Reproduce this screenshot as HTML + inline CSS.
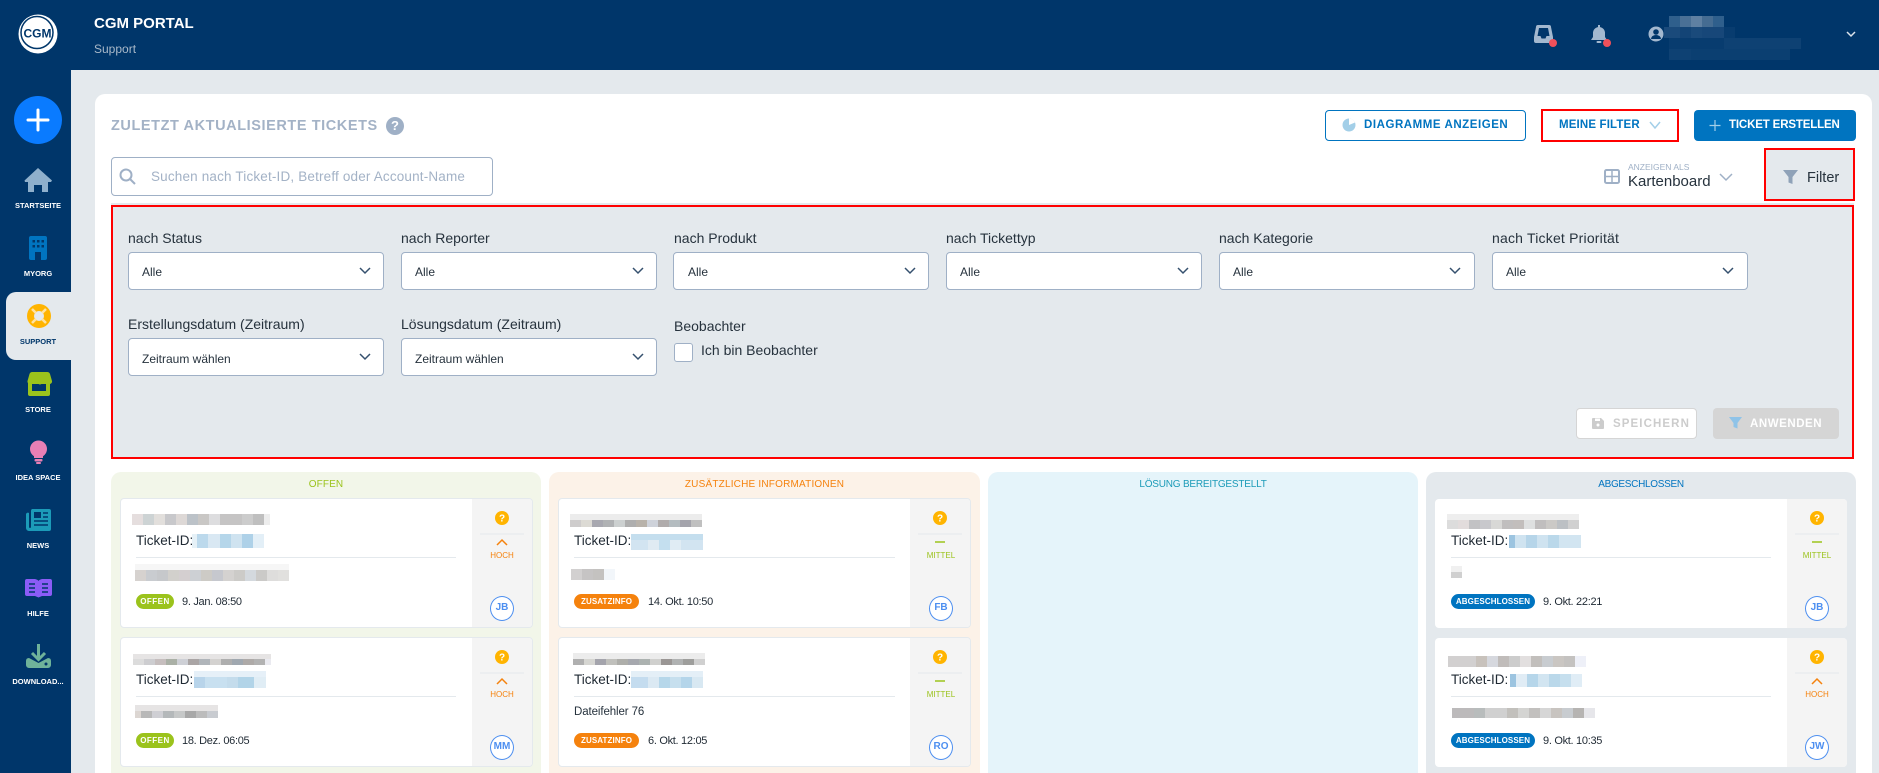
<!DOCTYPE html>
<html lang="de"><head><meta charset="utf-8"><title>CGM Portal Support</title>
<style>
html,body{margin:0;padding:0;width:1879px;height:773px;overflow:hidden}
body{background:#e4e9ed;font-family:"Liberation Sans",sans-serif;color:#1f2933}
div,span{position:absolute;box-sizing:border-box}
#r{left:0;top:0;width:1879px;height:773px;overflow:hidden;background:#e4e9ed}
.t{white-space:nowrap;line-height:20px;height:20px}
.nav{width:76px;left:0;text-align:center;font-size:7.5px;font-weight:700;color:#fff;line-height:12px;height:12px;white-space:nowrap}
.lb{font-size:14px;line-height:20px;height:20px;white-space:nowrap;color:#26323d}
.sel{width:256px;height:38px;background:#fff;border:1px solid #9fb0c6;border-radius:4px}
.sv{font-size:12px;line-height:20px;height:20px;white-space:nowrap;color:#26323d}
.col{top:472px;width:430px;height:301px;border-radius:10px 10px 0 0}
.ch{top:478px;height:14px;line-height:14px;font-size:10px;text-align:center;white-space:nowrap}
.card{width:413px;height:130px;background:#fff;border:1px solid #e4e9ed;border-radius:4px;overflow:hidden}
.side{right:0;top:0;bottom:0;width:60px;background:#f4f4f4}
.tid{font-size:13.5px;line-height:18px;height:18px;white-space:nowrap}
.hr{height:1px;background:#e4e9ed}
.bd{height:15px;border-radius:8px;color:#fff;font-size:8px;font-weight:700;line-height:15px;text-align:center;white-space:nowrap;letter-spacing:.1px}
.dt{font-size:11px;line-height:16px;height:16px;white-space:nowrap;letter-spacing:-.3px}
.pr{font-size:8px;line-height:10px;height:10px;text-align:center;width:60px;white-space:nowrap}
.av{width:24px;height:25px;border:1.5px solid #4d8ff0;border-radius:50%;background:#fff;color:#4d8ff0;font-weight:700;font-size:10px;line-height:22px;text-align:center}
</style></head><body>
<div id="r">

<div style="left:0;top:0;width:1879px;height:70px;background:#00366a"></div>
<div style="left:0;top:0;width:71px;height:773px;background:#00366a"></div>
<div style="left:6px;top:292px;width:65px;height:68px;background:#e4e9ed;border-radius:10px 0 0 10px"></div>
<div class="t" style="left:94px;top:14px;font-size:15px;font-weight:700;color:#fff">CGM PORTAL</div>
<div class="t" style="left:94px;top:39px;font-size:12px;color:#a9b9c9">Support</div>

<div class="nav" style="top:200px">STARTSEITE</div>
<div class="nav" style="top:268px">MYORG</div>
<div class="nav" style="top:336px;color:#00366a">SUPPORT</div>
<div class="nav" style="top:404px">STORE</div>
<div class="nav" style="top:472px">IDEA SPACE</div>
<div class="nav" style="top:540px">NEWS</div>
<div class="nav" style="top:608px">HILFE</div>
<div class="nav" style="top:676px">DOWNLOAD...</div>

<div style="left:95px;top:94px;width:1777px;height:679px;background:#fff;border-radius:10px 10px 0 0"></div>

<div class="t" style="left:111px;top:116px;font-size:14.5px;font-weight:700;letter-spacing:.58px;color:#a3b2c6">ZULETZT AKTUALISIERTE TICKETS</div>
<div style="left:386px;top:117px;width:18px;height:18px;border-radius:50%;background:#9fb0c6;color:#fff;font-weight:700;font-size:13px;line-height:18px;text-align:center">?</div>

<div style="left:111px;top:157px;width:382px;height:39px;border:1px solid #9fb0c6;border-radius:4px;background:#fff"></div>
<div class="t" style="left:151px;top:167px;font-size:13.5px;color:#a3b2c6;letter-spacing:.17px">Suchen nach Ticket-ID, Betreff oder Account-Name</div>

<div style="left:1325px;top:110px;width:201px;height:31px;border:1px solid #0074c0;border-radius:4px"></div>
<div class="t" style="left:1364px;top:115px;font-size:11.5px;font-weight:700;color:#0074c0;letter-spacing:.55px">DIAGRAMME ANZEIGEN</div>
<div style="left:1541px;top:109px;width:138px;height:33px;border:2px solid #f00"></div>
<div class="t" style="left:1559px;top:115px;font-size:11.5px;font-weight:700;color:#0074c0;letter-spacing:.15px">MEINE FILTER</div>
<div style="left:1694px;top:110px;width:162px;height:31px;background:#0074c0;border-radius:4px"></div>
<div class="t" style="left:1729px;top:115px;font-size:11.5px;font-weight:700;color:#fff;letter-spacing:-.15px">TICKET ERSTELLEN</div>

<div class="t" style="left:1628px;top:157px;font-size:8.5px;color:#9fb0c6">ANZEIGEN ALS</div>
<div class="t" style="left:1628px;top:172px;font-size:15px;color:#26323d">Kartenboard</div>
<div style="left:1764px;top:148px;width:91px;height:53px;background:#e4e9ed;border:2px solid #f00"></div>
<div class="t" style="left:1807px;top:168px;font-size:14.5px;color:#26323d">Filter</div>

<div style="left:111px;top:203px;width:1743px;height:3px;background:#e4e9ed"></div>
<div style="left:111px;top:205px;width:1743px;height:254px;background:#e4e9ed;border:2px solid #f00"></div>

<div class="lb" style="left:128px;top:228px">nach Status</div>
<div class="lb" style="left:401px;top:228px">nach Reporter</div>
<div class="lb" style="left:674px;top:228px">nach Produkt</div>
<div class="lb" style="left:946px;top:228px">nach Tickettyp</div>
<div class="lb" style="left:1219px;top:228px">nach Kategorie</div>
<div class="lb" style="left:1492px;top:228px;letter-spacing:.2px">nach Ticket Priorität</div>
<div class="sel" style="left:128px;top:252px"></div><div class="sv" style="left:142px;top:262px">Alle</div>
<div class="sel" style="left:401px;top:252px"></div><div class="sv" style="left:415px;top:262px">Alle</div>
<div class="sel" style="left:673px;top:252px"></div><div class="sv" style="left:688px;top:262px">Alle</div>
<div class="sel" style="left:946px;top:252px"></div><div class="sv" style="left:960px;top:262px">Alle</div>
<div class="sel" style="left:1219px;top:252px"></div><div class="sv" style="left:1233px;top:262px">Alle</div>
<div class="sel" style="left:1492px;top:252px"></div><div class="sv" style="left:1506px;top:262px">Alle</div>
<div class="lb" style="left:128px;top:314px">Erstellungsdatum (Zeitraum)</div>
<div class="lb" style="left:401px;top:314px">Lösungsdatum (Zeitraum)</div>
<div class="lb" style="left:674px;top:316px">Beobachter</div>
<div class="sel" style="left:128px;top:338px"></div><div class="sv" style="left:142px;top:349px">Zeitraum wählen</div>
<div class="sel" style="left:401px;top:338px"></div><div class="sv" style="left:415px;top:349px">Zeitraum wählen</div>
<div style="left:674px;top:343px;width:19px;height:19px;background:#fff;border:1px solid #9fb0c6;border-radius:3px"></div>
<div class="lb" style="left:701px;top:340px">Ich bin Beobachter</div>

<div style="left:1576px;top:408px;width:121px;height:31px;background:#fff;border:1px solid #d5d5d5;border-radius:4px"></div>
<div class="t" style="left:1613px;top:414px;font-size:11.5px;font-weight:700;color:#ccc;letter-spacing:1.1px">SPEICHERN</div>
<div style="left:1713px;top:408px;width:126px;height:31px;background:#d5d5d5;border-radius:4px"></div>
<div class="t" style="left:1750px;top:414px;font-size:11.5px;font-weight:700;color:#fff;letter-spacing:.55px">ANWENDEN</div>

<div class="col" style="left:111px;background:#f2f6e9"></div>
<div class="col" style="left:549px;width:431px;background:#fcf2e8"></div>
<div class="col" style="left:988px;background:#e5f4fa"></div>
<div class="col" style="left:1426px;background:#e4e9ed"></div>
<div class="ch" style="left:111px;width:430px;color:#9bc31c;letter-spacing:.1px">OFFEN</div>
<div class="ch" style="left:549px;width:431px;color:#f5820d;letter-spacing:.2px">ZUSÄTZLICHE INFORMATIONEN</div>
<div class="ch" style="left:988px;width:430px;color:#1c9bb8;letter-spacing:-.2px">LÖSUNG BEREITGESTELLT</div>
<div class="ch" style="left:1426px;width:430px;color:#0074c0;letter-spacing:-.3px">ABGESCHLOSSEN</div>

<!-- column 1 -->
<div class="card" style="left:120px;top:498px"><div class="side"></div></div>
<div class="card" style="left:120px;top:637px"><div class="side"></div></div>
<div class="tid" style="left:136px;top:532px">Ticket-ID:</div><div class="hr" style="left:136px;top:557px;width:320px"></div>
<div class="tid" style="left:136px;top:671px">Ticket-ID:</div><div class="hr" style="left:136px;top:696px;width:320px"></div>
<div class="bd" style="left:136px;top:594px;width:38px;background:#9bc31c;letter-spacing:.5px">OFFEN</div><div class="dt" style="left:182px;top:594px">9. Jan. 08:50</div>
<div class="bd" style="left:136px;top:733px;width:38px;background:#9bc31c;letter-spacing:.5px">OFFEN</div><div class="dt" style="left:182px;top:733px">18. Dez. 06:05</div>
<div class="pr" style="left:472px;top:551px;color:#f5820d">HOCH</div><div class="av" style="left:490px;top:596px">JB</div>
<div class="pr" style="left:472px;top:690px;color:#f5820d">HOCH</div><div class="av" style="left:490px;top:735px">MM</div>

<!-- column 2 -->
<div class="card" style="left:558px;top:498px"><div class="side"></div></div>
<div class="card" style="left:558px;top:637px"><div class="side"></div></div>
<div class="tid" style="left:574px;top:532px">Ticket-ID:</div><div class="hr" style="left:574px;top:557px;width:321px"></div>
<div class="tid" style="left:574px;top:671px">Ticket-ID:</div><div class="hr" style="left:574px;top:696px;width:321px"></div>
<div class="t" style="left:574px;top:702px;font-size:11.5px;letter-spacing:-.1px;color:#26323d">Dateifehler 76</div>
<div class="bd" style="left:574px;top:594px;width:65px;background:#f5820d">ZUSATZINFO</div><div class="dt" style="left:648px;top:594px">14. Okt. 10:50</div>
<div class="bd" style="left:574px;top:733px;width:65px;background:#f5820d">ZUSATZINFO</div><div class="dt" style="left:648px;top:733px">6. Okt. 12:05</div>
<div class="pr" style="left:911px;top:551px;color:#9bc31c">MITTEL</div><div class="av" style="left:929px;top:596px">FB</div>
<div class="pr" style="left:911px;top:690px;color:#9bc31c">MITTEL</div><div class="av" style="left:929px;top:735px">RO</div>

<!-- column 4 -->
<div class="card" style="left:1435px;top:499px;width:412px;height:129px;border:0"><div class="side"></div></div>
<div class="card" style="left:1435px;top:638px;width:412px;height:129px;border:0"><div class="side"></div></div>
<div class="tid" style="left:1451px;top:532px">Ticket-ID:</div><div class="hr" style="left:1451px;top:557px;width:320px"></div>
<div class="tid" style="left:1451px;top:671px">Ticket-ID:</div><div class="hr" style="left:1451px;top:696px;width:320px"></div>
<div class="bd" style="left:1451px;top:594px;width:84px;background:#0074c0">ABGESCHLOSSEN</div><div class="dt" style="left:1543px;top:594px">9. Okt. 22:21</div>
<div class="bd" style="left:1451px;top:733px;width:84px;background:#0074c0">ABGESCHLOSSEN</div><div class="dt" style="left:1543px;top:733px">9. Okt. 10:35</div>
<div class="pr" style="left:1787px;top:551px;color:#9bc31c">MITTEL</div><div class="av" style="left:1805px;top:596px">JB</div>
<div class="pr" style="left:1787px;top:690px;color:#f5820d">HOCH</div><div class="av" style="left:1805px;top:735px">JW</div>

<svg width="1879" height="773" style="position:absolute;left:0;top:0">
<!-- logo -->
<circle cx="38" cy="34" r="19.500" fill="#fff"/>
<circle cx="37" cy="32.500" r="16" fill="none" stroke="#00366a" stroke-width="1.500"/>
<text x="37.500" y="37.500" text-anchor="middle" font-family="Liberation Sans" font-weight="700" font-size="12" fill="#00366a">CGM</text>
<!-- plus -->
<circle cx="38" cy="120" r="24" fill="#0a7bff"/><path d="M38 110v20M28 120h20" stroke="#fff" stroke-width="3" stroke-linecap="round"/>
<!-- home -->
<path d="M38 168L52 180.500 51 182H48V192H42V185H34V192H28V182H25L24.500 180.500z" fill="#8fb0cc"/>
<!-- myorg -->
<rect x="29" y="236" width="18" height="24" rx="2" fill="#0074c0"/>
<g fill="#00366a"><rect x="32.500" y="240" width="2.500" height="2.500"/><rect x="37" y="240" width="2.500" height="2.500"/><rect x="41.500" y="240" width="2.500" height="2.500"/><rect x="32.500" y="245" width="2.500" height="2.500"/><rect x="37" y="245" width="2.500" height="2.500"/><rect x="41.500" y="245" width="2.500" height="2.500"/><rect x="35" y="252" width="6" height="8"/></g>
<!-- support -->
<circle cx="39" cy="316" r="12" fill="#ffb400"/><circle cx="39" cy="316" r="5" fill="#e4e9ed"/><path d="M32 309l4 4M46 309l-4 4M32 323l4-4M46 323l-4-4" stroke="#ffe2a0" stroke-width="2.500"/>
<!-- store -->
<rect x="28" y="380" width="22" height="16" rx="2" fill="#9bc31c"/>
<rect x="32" y="384" width="14" height="7" fill="#00366a"/>
<path d="M30 372h17a3 3 0 0 1 3 2l2 7a2.500 2.500 0 0 1-5 1a2.500 2.500 0 0 1-4.500 0a2.500 2.500 0 0 1-5 0a2.500 2.500 0 0 1-4.500 0a2.500 2.500 0 0 1-5.500-1l2-7a3 3 0 0 1 3-2z" fill="#9bc31c"/>
<!-- bulb -->
<circle cx="38.500" cy="449" r="8.500" fill="#e87fb5"/><path d="M34 454h9v4h-9z" fill="#e87fb5"/><rect x="34.500" y="459" width="8" height="2.500" rx="1" fill="#e87fb5"/><rect x="36" y="462" width="5" height="2" rx="1" fill="#e87fb5"/>
<!-- news -->
<path d="M32 509h17a2 2 0 0 1 2 2v18a2 2 0 0 1-2 2H29a3 3 0 0 1-3-3v-14a2 2 0 0 1 3-1v14a1 1 0 0 0 2 0v-16a2 2 0 0 1 1-2z" fill="#1c9bb8"/>
<rect x="34" y="512" width="7" height="6" fill="#00366a"/><path d="M43 513h5M43 517h5M34 521h14M34 525h14" stroke="#00366a" stroke-width="1.500"/>
<!-- hilfe -->
<path d="M25 581a2 2 0 0 1 2-2h7c2 0 4 1 4.500 2c.5-1 2.500-2 4.500-2h7a2 2 0 0 1 2 2v13a2 2 0 0 1-2 2H42l-3.500 1.500L35 596H27a2 2 0 0 1-2-2z" fill="#8b5cf6"/>
<path d="M29 584h6M29 588h6M29 592h6M42 584h6M42 588h6M42 592h6" stroke="#00366a" stroke-width="1.500"/>
<!-- download -->
<path d="M38.500 644v15M32 653l6.500 6.500L45 653" fill="none" stroke="#6fb39a" stroke-width="3"/>
<path d="M29 658l9.500 5 9.500-5q3 0 3 3v4a3 3 0 0 1-3 3H29a3 3 0 0 1-3-3v-4q0-3 3-3z" fill="#6fb39a"/><circle cx="46" cy="664" r="1.500" fill="#00366a"/>

<!-- header icons -->
<path d="M1536 27q0-2 2-2h11q2 0 2 2l2 10v4q0 2-2 2h-15q-2 0-2-2v-4z" fill="#a3b8cf"/><path d="M1539 28h9l1.500 8h-3l-1 2.500h-4l-1-2.500h-3z" fill="#00366a"/>
<circle cx="1553" cy="43" r="4" fill="#f0505a"/>
<path d="M1599 27a6 6 0 0 1 6 6v4l2 3h-16l2-3v-4a6 6 0 0 1 6-6z" fill="#a3b8cf"/><rect x="1598" y="25" width="2" height="3" fill="#a3b8cf"/><rect x="1596.500" y="41" width="5" height="2" rx="1" fill="#a3b8cf"/>
<circle cx="1607" cy="43" r="4" fill="#f0505a"/>
<circle cx="1656" cy="34" r="7.500" fill="#a3b8cf"/><circle cx="1656" cy="32" r="2.800" fill="#00366a"/><path d="M1651 39a5 4 0 0 1 10 0z" fill="#00366a"/>
<g shape-rendering="crispEdges">
<rect x="1669" y="16" width="11" height="11" fill="#2f5f8c"/><rect x="1680" y="16" width="11" height="11" fill="#4a7096"/><rect x="1691" y="16" width="11" height="11" fill="#5f80a2"/><rect x="1702" y="16" width="11" height="11" fill="#456c92"/><rect x="1713" y="16" width="11" height="11" fill="#2f5f8c"/>
<rect x="1664" y="27" width="16" height="11" fill="#1a4a7b"/><rect x="1680" y="27" width="11" height="11" fill="#134476"/><rect x="1691" y="27" width="11" height="11" fill="#1a4a7b"/><rect x="1702" y="27" width="22" height="11" fill="#174779"/><rect x="1724" y="27" width="11" height="11" fill="#083c6f"/>
<rect x="1669" y="38" width="55" height="11" fill="#083c6f"/><rect x="1724" y="38" width="77" height="11" fill="#0e4173"/>
<rect x="1669" y="49" width="22" height="11" fill="#0e4173"/><rect x="1691" y="49" width="99" height="11" fill="#0b3f71"/>
</g>
<path d="M1847 32l4 4 4-4" fill="none" stroke="#dce4ec" stroke-width="1.500"/>

<!-- top buttons -->
<circle cx="1349" cy="125" r="6.500" fill="#a3cfe8"/><path d="M1349 125v-6.500a6.500 6.500 0 0 1 6 4z" fill="#fff"/>
<path d="M1650 122l5 6 5-6" fill="none" stroke="#a3cfe8" stroke-width="1.500"/>
<path d="M1715 120v11M1709.500 125.500h11" stroke="#a3cfe8" stroke-width="1.200"/>
<!-- search -->
<circle cx="126" cy="175" r="5.500" fill="none" stroke="#9fb0c6" stroke-width="2"/><path d="M130 179l5 5" stroke="#9fb0c6" stroke-width="2"/>
<!-- view icon -->
<rect x="1605" y="170" width="14" height="13" rx="1.500" fill="none" stroke="#9fb0c6" stroke-width="2"/><path d="M1612 170v13M1605 176.500h14" stroke="#9fb0c6" stroke-width="1.500"/>
<path d="M1720 174l6 6 6-6" fill="none" stroke="#9fb0c6" stroke-width="1.500"/>
<path d="M1783 170h15l-5.500 7v7l-4-1.500v-5.500z" fill="#8fa2b8"/>
<!-- select chevrons -->
<g fill="none" stroke="#35506e" stroke-width="1.500">
<path d="M360 268l5 5 5-5M633 268l5 5 5-5M905 268l5 5 5-5M1178 268l5 5 5-5M1450 268l5 5 5-5M1723 268l5 5 5-5M360 354l5 5 5-5M633 354l5 5 5-5"/>
</g>
<!-- save / apply -->
<path d="M1593 418h8l3 3v7a1 1 0 0 1-1 1h-10a1 1 0 0 1-1-1v-9a1 1 0 0 1 1-1z" fill="#ccc"/><rect x="1595" y="418.500" width="5" height="2.500" fill="#fff"/><circle cx="1598" cy="425" r="1.500" fill="#fff"/>
<path d="M1729 417h13l-4.500 6v5.500l-4-1.500v-4z" fill="#8fc3e8"/>

<!-- side panel marks -->
<g font-family="Liberation Sans" font-weight="700" font-size="10" fill="#fff" text-anchor="middle">
<circle cx="502" cy="518" r="7" fill="#ffb400"/><text x="502" y="521.500">?</text>
<circle cx="502" cy="657" r="7" fill="#ffb400"/><text x="502" y="660.500">?</text>
<circle cx="940" cy="518" r="7" fill="#ffb400"/><text x="940" y="521.500">?</text>
<circle cx="940" cy="657" r="7" fill="#ffb400"/><text x="940" y="660.500">?</text>
<circle cx="1817" cy="518" r="7" fill="#ffb400"/><text x="1817" y="521.500">?</text>
<circle cx="1817" cy="657" r="7" fill="#ffb400"/><text x="1817" y="660.500">?</text>
</g>
<path d="M480 534h44M480 673h44M918 534h44M918 673h44M1795 534h44M1795 673h44" stroke="#e4e9ed"/>
<path d="M497 545l5-5 5 5M497 684l5-5 5 5M1812 684l5-5 5 5" fill="none" stroke="#f5820d" stroke-width="1.500"/>
<path d="M935 542h10M935 681h10M1812 542h10" stroke="#9bc31c" stroke-width="1.500"/>

<!-- pixelated redactions -->
<g shape-rendering="crispEdges">
<rect x="132" y="514" width="11" height="11" fill="#e5dede"/><rect x="143" y="514" width="11" height="11" fill="#cdd3d4"/><rect x="154" y="514" width="11" height="11" fill="#e2dfdc"/><rect x="165" y="514" width="11" height="11" fill="#c8c8cb"/><rect x="176" y="514" width="11" height="11" fill="#ddd8d6"/><rect x="187" y="514" width="11" height="11" fill="#bcc2c8"/><rect x="198" y="514" width="11" height="11" fill="#c9c7c5"/><rect x="209" y="514" width="11" height="11" fill="#dddddf"/><rect x="220" y="514" width="22" height="11" fill="#c5c4c4"/><rect x="242" y="514" width="11" height="11" fill="#cccccc"/><rect x="253" y="514" width="11" height="11" fill="#bfbfbf"/><rect x="264" y="514" width="6" height="11" fill="#ededed"/>
<rect x="192" y="534" width="5" height="14" fill="#e6f1f7"/><rect x="197" y="534" width="11" height="14" fill="#bcd9ec"/><rect x="208" y="534" width="12" height="14" fill="#d9e8f3"/><rect x="220" y="534" width="11" height="14" fill="#b5d6ea"/><rect x="231" y="534" width="11" height="14" fill="#cfe3f0"/><rect x="242" y="534" width="11" height="14" fill="#aed1e8"/><rect x="253" y="534" width="11" height="14" fill="#e3eff7"/>
<rect x="135" y="564" width="154" height="6" fill="#f6f6f6"/>
<rect x="135" y="570" width="11" height="11" fill="#d6d2cf"/><rect x="146" y="570" width="11" height="11" fill="#c9ccd0"/><rect x="157" y="570" width="11" height="11" fill="#c6c8cb"/><rect x="168" y="570" width="11" height="11" fill="#d2d0cc"/><rect x="179" y="570" width="11" height="11" fill="#d4cfd0"/><rect x="190" y="570" width="11" height="11" fill="#cdd0d4"/><rect x="201" y="570" width="11" height="11" fill="#cdcbc6"/><rect x="212" y="570" width="11" height="11" fill="#c6c8ce"/><rect x="223" y="570" width="11" height="11" fill="#d4d2d0"/><rect x="234" y="570" width="11" height="11" fill="#cccbc8"/><rect x="245" y="570" width="11" height="11" fill="#d4d9de"/><rect x="256" y="570" width="11" height="11" fill="#cbcac8"/><rect x="267" y="570" width="11" height="11" fill="#dedddc"/><rect x="278" y="570" width="11" height="11" fill="#e1e0de"/>
<rect x="133" y="654" width="138" height="5" fill="#e6e4e4"/>
<rect x="133" y="659" width="11" height="6" fill="#dcdcdc"/><rect x="144" y="659" width="11" height="6" fill="#cdcdd0"/><rect x="155" y="659" width="11" height="6" fill="#c6bebe"/><rect x="166" y="659" width="11" height="6" fill="#aab0a6"/><rect x="177" y="659" width="11" height="6" fill="#ced0d6"/><rect x="188" y="659" width="11" height="6" fill="#aaa5a5"/><rect x="199" y="659" width="11" height="6" fill="#b0b5ba"/><rect x="210" y="659" width="11" height="6" fill="#d4d2d0"/><rect x="221" y="659" width="11" height="6" fill="#aeaeae"/><rect x="232" y="659" width="11" height="6" fill="#a0a8b0"/><rect x="243" y="659" width="11" height="6" fill="#aeaaa8"/><rect x="254" y="659" width="11" height="6" fill="#b2b2b2"/><rect x="265" y="659" width="6" height="6" fill="#eaeaf0"/>
<rect x="194" y="671" width="72" height="6" fill="#e6f0f8"/>
<rect x="194" y="677" width="11" height="11" fill="#b8d4ea"/><rect x="205" y="677" width="22" height="11" fill="#c8e0f0"/><rect x="227" y="677" width="11" height="11" fill="#c4dcec"/><rect x="238" y="677" width="16" height="11" fill="#b2d4e8"/><rect x="254" y="677" width="12" height="11" fill="#e0edf5"/>
<rect x="135" y="705" width="83" height="6" fill="#e6e4e4"/>
<rect x="135" y="711" width="6" height="7" fill="#dcd6d2"/><rect x="141" y="711" width="11" height="7" fill="#b8b8b8"/><rect x="152" y="711" width="11" height="7" fill="#cfcfd4"/><rect x="163" y="711" width="11" height="7" fill="#b4b8ba"/><rect x="174" y="711" width="11" height="7" fill="#c6c8c8"/><rect x="185" y="711" width="11" height="7" fill="#a8a8a8"/><rect x="196" y="711" width="11" height="7" fill="#bcbcbc"/><rect x="207" y="711" width="11" height="7" fill="#c8cbd0"/>
<rect x="570" y="514" width="132" height="6" fill="#ececec"/>
<rect x="570" y="520" width="11" height="7" fill="#cecccc"/><rect x="581" y="520" width="11" height="7" fill="#dcdad4"/><rect x="592" y="520" width="11" height="7" fill="#a8a8b0"/><rect x="603" y="520" width="11" height="7" fill="#b0b2b4"/><rect x="614" y="520" width="11" height="7" fill="#ccd0d0"/><rect x="625" y="520" width="11" height="7" fill="#aeaeae"/><rect x="636" y="520" width="11" height="7" fill="#b8b2aa"/><rect x="647" y="520" width="11" height="7" fill="#ced2da"/><rect x="658" y="520" width="11" height="7" fill="#b0acac"/><rect x="669" y="520" width="11" height="7" fill="#b4bcc0"/><rect x="680" y="520" width="11" height="7" fill="#a4a4ac"/><rect x="691" y="520" width="11" height="7" fill="#c0c0c0"/>
<rect x="631" y="534" width="72" height="6" fill="#c4deee"/><rect x="631" y="540" width="17" height="10" fill="#d2e4f1"/><rect x="648" y="540" width="11" height="10" fill="#e0ebf3"/><rect x="659" y="540" width="11" height="10" fill="#c4dfef"/><rect x="670" y="540" width="11" height="10" fill="#e0ecf4"/><rect x="681" y="540" width="22" height="10" fill="#d2e4f1"/>
<rect x="571" y="569" width="11" height="11" fill="#d2d0d0"/><rect x="582" y="569" width="11" height="11" fill="#c6c4c4"/><rect x="593" y="569" width="11" height="11" fill="#c4c2c0"/><rect x="604" y="569" width="11" height="11" fill="#f2f6fa"/>
<rect x="573" y="653" width="132" height="6" fill="#ececec"/>
<rect x="573" y="659" width="11" height="6" fill="#b0b0b0"/><rect x="584" y="659" width="11" height="6" fill="#d6d6d2"/><rect x="595" y="659" width="11" height="6" fill="#a4a4ac"/><rect x="606" y="659" width="11" height="6" fill="#c0c0bc"/><rect x="617" y="659" width="11" height="6" fill="#aeaeaa"/><rect x="628" y="659" width="11" height="6" fill="#a6a8ae"/><rect x="639" y="659" width="11" height="6" fill="#acb2b0"/><rect x="650" y="659" width="11" height="6" fill="#d0d0ce"/><rect x="661" y="659" width="11" height="6" fill="#9a9694"/><rect x="672" y="659" width="11" height="6" fill="#b0b2b2"/><rect x="683" y="659" width="11" height="6" fill="#9e9e9c"/><rect x="694" y="659" width="11" height="6" fill="#d0d0d0"/>
<rect x="631" y="671" width="72" height="6" fill="#e4eff7"/><rect x="631" y="677" width="17" height="11" fill="#c4dcef"/><rect x="648" y="677" width="11" height="11" fill="#dbe9f3"/><rect x="659" y="677" width="11" height="11" fill="#b6d7ea"/><rect x="670" y="677" width="11" height="11" fill="#c6dfee"/><rect x="681" y="677" width="11" height="11" fill="#b4d5ea"/><rect x="692" y="677" width="11" height="11" fill="#d8e8f2"/>
<rect x="1447" y="514" width="132" height="6" fill="#eeeeee"/>
<rect x="1447" y="520" width="11" height="9" fill="#dcdcdc"/><rect x="1458" y="520" width="11" height="9" fill="#e2dcdc"/><rect x="1469" y="520" width="11" height="9" fill="#c2c2c4"/><rect x="1480" y="520" width="11" height="9" fill="#c8c8cc"/><rect x="1491" y="520" width="11" height="9" fill="#d8d8d6"/><rect x="1502" y="520" width="11" height="9" fill="#c0bebe"/><rect x="1513" y="520" width="11" height="9" fill="#c2bebc"/><rect x="1524" y="520" width="11" height="9" fill="#dee0e0"/><rect x="1535" y="520" width="11" height="9" fill="#c0bebe"/><rect x="1546" y="520" width="11" height="9" fill="#cbc9c6"/><rect x="1557" y="520" width="11" height="9" fill="#bcc0c4"/><rect x="1568" y="520" width="11" height="9" fill="#d0d0d0"/>
<rect x="1509" y="535" width="6" height="13" fill="#9cc4e0"/><rect x="1515" y="535" width="11" height="13" fill="#cfe3f0"/><rect x="1526" y="535" width="11" height="13" fill="#b6d5e9"/><rect x="1537" y="535" width="11" height="13" fill="#cfe3f0"/><rect x="1548" y="535" width="11" height="13" fill="#bad8ea"/><rect x="1559" y="535" width="22" height="13" fill="#d2e5f1"/>
<rect x="1451" y="566" width="11" height="6" fill="#f0f0f0"/><rect x="1451" y="572" width="11" height="6" fill="#d0d0d0"/>
<rect x="1448" y="656" width="28" height="11" fill="#d2d0d0"/><rect x="1476" y="656" width="11" height="11" fill="#c8c2bc"/><rect x="1487" y="656" width="11" height="11" fill="#d6d8de"/><rect x="1498" y="656" width="11" height="11" fill="#c0bcba"/><rect x="1509" y="656" width="11" height="11" fill="#cccccc"/><rect x="1520" y="656" width="11" height="11" fill="#e2dfdf"/><rect x="1531" y="656" width="11" height="11" fill="#c2bfbc"/><rect x="1542" y="656" width="11" height="11" fill="#c8ccd0"/><rect x="1553" y="656" width="11" height="11" fill="#cac6c2"/><rect x="1564" y="656" width="11" height="11" fill="#c4c2c0"/><rect x="1575" y="656" width="11" height="11" fill="#eef0f8"/>
<rect x="1510" y="674" width="6" height="13" fill="#9cc4e0"/><rect x="1516" y="674" width="11" height="13" fill="#e0ecf5"/><rect x="1527" y="674" width="11" height="13" fill="#b6d6ea"/><rect x="1538" y="674" width="11" height="13" fill="#d2e5f1"/><rect x="1549" y="674" width="11" height="13" fill="#bad8ea"/><rect x="1560" y="674" width="11" height="13" fill="#c6dfee"/><rect x="1571" y="674" width="11" height="13" fill="#e0edf6"/>
<rect x="1452" y="708" width="22" height="10" fill="#bcbabb"/><rect x="1474" y="708" width="11" height="10" fill="#b8bcbc"/><rect x="1485" y="708" width="22" height="10" fill="#d0d0d0"/><rect x="1507" y="708" width="11" height="10" fill="#c2c0bc"/><rect x="1518" y="708" width="11" height="10" fill="#d4d4d2"/><rect x="1529" y="708" width="11" height="10" fill="#c2c0be"/><rect x="1540" y="708" width="11" height="10" fill="#d6d6d6"/><rect x="1551" y="708" width="11" height="10" fill="#c8c4c0"/><rect x="1562" y="708" width="11" height="10" fill="#c8ccd0"/><rect x="1573" y="708" width="11" height="10" fill="#b6b4b2"/><rect x="1584" y="708" width="11" height="10" fill="#e6e6ea"/>
</g>
</svg>
</div>
</body></html>
